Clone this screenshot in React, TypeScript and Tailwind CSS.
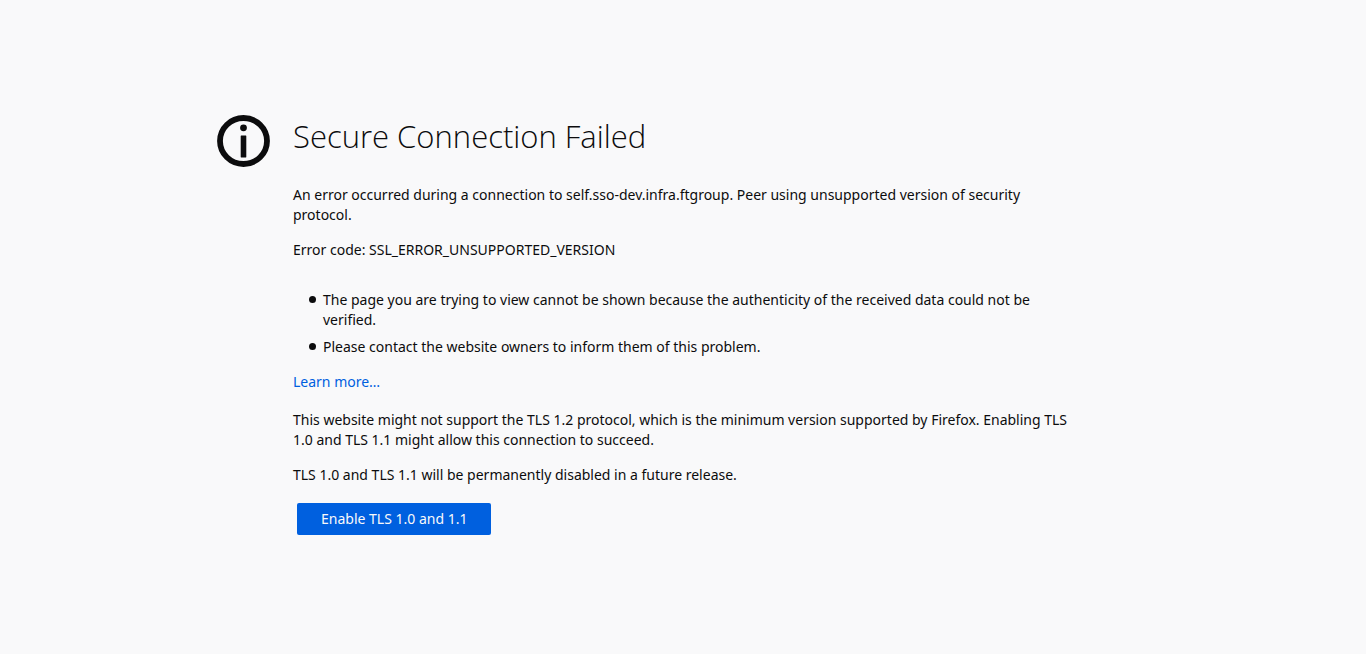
const reasons = [
  'The page you are trying to view cannot be shown because the authenticity of the received data could not be verified.',
  'Please contact the website owners to inform them of this problem.',
];

function InfoIcon() {
  return (
    <svg viewBox="0 0 53 52" className="h-[52px] w-[53px] shrink-0" aria-hidden="true">
      <ellipse cx="26.5" cy="26" rx="23.5" ry="23" fill="none" stroke="#0c0c0d" strokeWidth="5.8" />
      <circle cx="26.5" cy="12.8" r="3.4" fill="#0c0c0d" />
      <rect x="23.7" y="20.5" width="5.6" height="22" rx="0.4" fill="#0c0c0d" />
    </svg>
  );
}

export default function App() {
  return (
    <main className="flex min-h-screen flex-col items-center justify-center bg-[#f9f9fa] px-12 py-8 font-['Noto_Sans','Open_Sans',sans-serif] text-sm/5 text-[#0c0c0d]">
      <div className="flex w-full max-w-[932px] items-start gap-[23px] pr-[76px] pb-1">
        <InfoIcon />
        <div className="min-w-0 flex-1">
          <h1 className="mb-[27px] font-['Open_Sans','Noto_Sans',sans-serif] text-[31px]/[43px] font-light">
            Secure Connection Failed
          </h1>
          <div className="flex flex-col gap-[15px]">
            <p>
              An error occurred during a connection to self.sso-dev.infra.ftgroup. Peer using unsupported version of
              security protocol.
            </p>
            <p>Error code: SSL_ERROR_UNSUPPORTED_VERSION</p>
            <ul className="mt-[15px] flex flex-col gap-[7px] pl-4">
              {reasons.map((reason) => (
                <li
                  key={reason}
                  className="flex items-start gap-[7px] before:mt-1.5 before:size-[7px] before:shrink-0 before:rounded-full before:bg-[#0c0c0d]"
                >
                  <span>{reason}</span>
                </li>
              ))}
            </ul>
            <a href="#learn-more" className="self-start text-[#0060df] hover:underline">
              Learn more…
            </a>
            <p className="mt-[3px]">
              This website might not support the TLS 1.2 protocol, which is the minimum version supported by Firefox.
              Enabling TLS 1.0 and TLS 1.1 might allow this connection to succeed.
            </p>
            <p>TLS 1.0 and TLS 1.1 will be permanently disabled in a future release.</p>
            <button
              type="button"
              className="mt-[3px] ml-1 h-8 cursor-pointer self-start rounded-xs bg-[#0060df] px-6 text-[#f9f9fa] hover:bg-[#003eaa]"
            >
              Enable TLS 1.0 and 1.1
            </button>
          </div>
        </div>
      </div>
    </main>
  );
}
